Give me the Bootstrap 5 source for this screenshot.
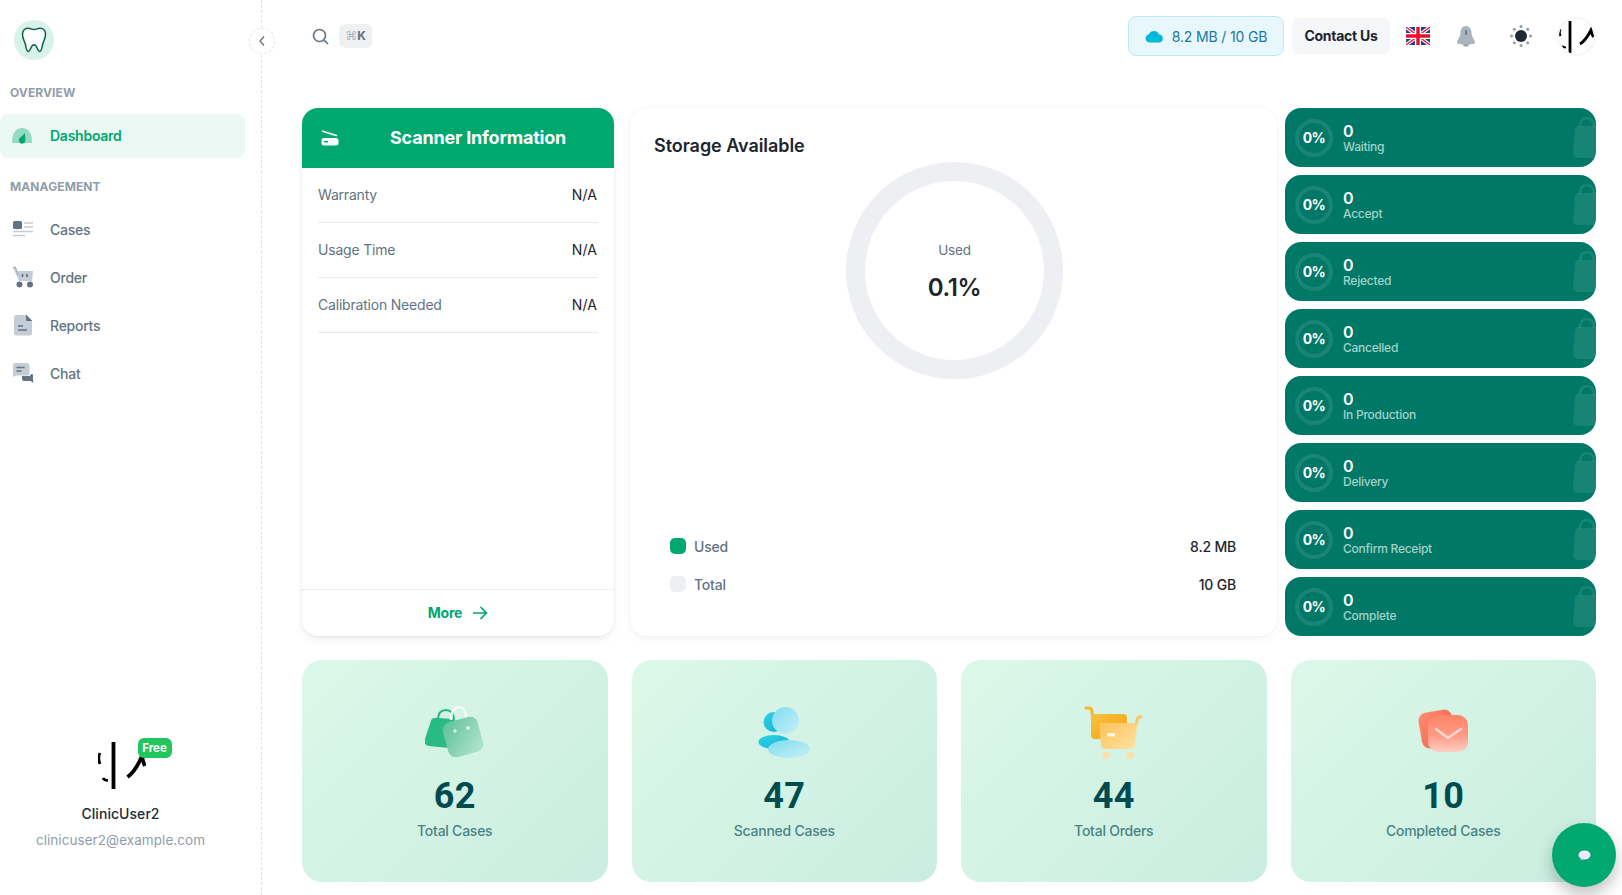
<!DOCTYPE html>
<html lang="en">
<head>
<meta charset="utf-8">
<title>Dashboard</title>
<link rel="stylesheet" href="https://cdn.jsdelivr.net/npm/bootstrap@5.3.0/dist/css/bootstrap.min.css">
<style>
html,body{height:100%;overflow:hidden;background:#fff}
body{font-family:"Inter","Noto Sans",sans-serif;font-size:14px;color:#1C252E}
.shell{height:895px}
.side{width:262px;flex:none;border-right:1px dashed #dfe3e8;position:relative;padding-top:20px}
.logo-disc{width:40px;height:40px;margin-left:14px;border-radius:50%;background:#d8f3ea}
.collapse-btn{position:absolute;left:249px;top:28px;width:26px;height:26px;border-radius:50%;border:1px dashed #dfe3e8;background:#fff}
.nav-head{font-size:12px;font-weight:700;color:#919EAB;line-height:18px;padding-left:10px;letter-spacing:.1px}
.nav-head.first{margin-top:24px;margin-bottom:12px}
.nav-head.second{margin-top:16px;margin-bottom:11px}
.side-link{height:44px;width:245px;padding:0 0 0 12px;margin-bottom:4px;color:#637381;font-size:14px;font-weight:500;border-radius:0 8px 8px 0;letter-spacing:-.25px}
.side-link svg{width:22px;height:22px;margin-right:16px;flex:none}
.side-link.on{background:rgba(0,167,111,.08);color:#00A76F;font-weight:600;border-radius:8px;padding-bottom:1px}
.side-user{margin-top:auto;padding:0 20px 44px 0;text-align:center}
.ava-wrap{position:relative;width:48px;height:48px;margin:0 auto 14px;left:1px}
.free-tag{position:absolute;left:40px;top:-3px;width:34px;height:20px;border-radius:6px;background:#22C55E;color:#fff;font-size:11.5px;font-weight:700;line-height:20px}
.u-name{font-weight:500;font-size:14px;line-height:22px;letter-spacing:.05px;color:#212B36}
.u-mail{color:#919EAB;font-size:13.5px;line-height:22px;margin-top:4px;letter-spacing:.06px}
.topper{height:72px;padding:0 26px 0 50px}
.kbd-chip{width:33px;height:24px;margin-left:10px;border-radius:6px;background:#eef0f2;color:#637381;font-size:12px;font-weight:700}
.cmd-g{font-family:"DejaVu Sans",sans-serif;font-weight:400;color:#a9b4bf;font-size:12px}
.store-pill{width:156px;height:40px;border:1px solid #bdeaf5;border-radius:8px;background:#e8f7fc;color:#1877a3;font-size:14px;margin-right:8px;letter-spacing:-.15px}
.store-pill svg{margin-right:9px}
.contact-btn{width:98px;height:36px;border-radius:8px;background:#F4F6F8;border:0;color:#1C252E;font-weight:700;font-size:14px;padding:0 0 1px;letter-spacing:-.25px}
.top-ico{width:40px;height:40px}
.ml-a{margin-left:8px}
.ml-b{margin-left:15px}
.top-ava{width:39px;height:39px;border-radius:50%;margin-left:16px;border:2px solid #F4F6F8;overflow:hidden}
.pane{padding:36px 26px 0 40px}
.upper{display:grid;grid-template-columns:312px 663px 319px;height:528px}
.scan-card{border:0;border-radius:16px;overflow:hidden;box-shadow:0 0 2px rgba(145,158,171,.2),0 4px 8px -2px rgba(145,158,171,.28)}
.scan-top{height:60px;background:#00A76F;color:#fff;border:0;padding:0 0 1px 19px;border-radius:0}
.scan-title{font-size:18px;font-weight:700;margin-left:51px;letter-spacing:-.2px}
.scan-body{padding:0 16px}
.scan-row{height:55px;border-bottom:1px solid #e7eaed;font-size:14px;padding-bottom:1px;letter-spacing:-.2px}
.scan-row span:first-child{color:#637381}
.scan-row span:last-child{letter-spacing:.1px;padding-right:1px}
.scan-foot{height:47px;padding:0 0 1px;background:#fff;border-top:1px dotted #dfe3e8;color:#00A76F;font-weight:700;font-size:14px;letter-spacing:-.2px}
.scan-foot svg{margin-left:2px}
.store-card{border:0;border-radius:16px;box-shadow:0 0 2px rgba(145,158,171,.2),0 4px 8px -2px rgba(145,158,171,.12);padding:26px 24px 0;margin-left:16px;width:647px}
.store-title{font-size:18px;font-weight:600;line-height:24px;letter-spacing:-.05px;margin:0}
.donut-box{width:217px;height:217px;margin:4px auto 0;border:19px solid #EDEFF2;border-radius:50%;transform:translateX(1px)}
.donut-used{color:#637381;font-size:13.5px;line-height:20px;margin-top:59px;letter-spacing:-.2px}
.donut-val{font-size:24px;font-weight:600;line-height:32px;margin-top:12px;letter-spacing:-.3px}
.legend{margin-top:auto;padding:0 17px 33px 16px}
.legend-row{height:38px;font-size:14px;letter-spacing:-.2px}
.legend-row .nm{color:#637381;font-weight:500}
.legend-row .vl{font-weight:500}
.dot-g{width:16px;height:16px;border-radius:5px;background:#00A76F;margin-right:8px}
.dot-l{width:16px;height:16px;border-radius:5px;background:#EDEFF2;margin-right:8px}
.stat-stack{margin-left:8px;width:311px;height:528px;gap:8px}
.stat-tile{height:59px;border-radius:16px;background:#007867;color:#fff;padding:2px 0 0 10px;position:relative;overflow:hidden}
.stat-ring{width:38px;height:38px;border-radius:50%;border:4px solid rgba(255,255,255,.1);font-size:14px;font-weight:700;margin:0 10px 2px 0;letter-spacing:-.6px}
.stat-num{font-size:16px;font-weight:600;line-height:16px}
.stat-lab{font-size:12px;font-weight:500;line-height:14px;color:#a3d2c8;margin-top:1px;letter-spacing:-.25px}
.stat-bag{position:absolute;left:288px;top:9px;width:28px;height:42px}
.lower{display:grid;grid-template-columns:repeat(4,1fr);column-gap:24px;margin-top:24px}
.kpi{height:222px;border:0;border-radius:20px;background:linear-gradient(135deg,#dcf8e9,#c9ede0);padding-top:46px;text-align:center}
.kpi svg{display:block;margin:0 auto;width:60px;height:54px}
.kpi-num{font-family:"Roboto",sans-serif;font-size:36px;font-weight:700;line-height:40px;color:#004B50;margin-top:16px;letter-spacing:.4px}
.kpi-lab{font-size:14px;font-weight:500;color:#004B50;opacity:.66;line-height:22px;margin-top:4px;letter-spacing:-.25px}
.chat-fab{position:fixed;left:1552px;top:823px;width:64px;height:64px;border-radius:50%;background:#00A76F;border:0;padding:0;box-shadow:0 8px 16px rgba(0,0,0,.24)}
</style>
</head>
<body>
<div class="d-flex shell">
  <aside class="side d-flex flex-column">
    <div class="logo-disc d-flex align-items-center justify-content-center">
      <svg width="26" height="28" viewBox="0 0 26 28" fill="#fbfdfc" stroke="#0d5f50" stroke-width="1.5" stroke-linejoin="round"><path d="M7 2.2c2.2 0 3.800 1.400 6 1.400s3.800-1.400 6-1.400c3.500 0 5.500 2.800 5.500 6.300 0 4-2 6.500-2.800 9.500-.7 2.700-1 7.500-3.200 7.500-2.400 0-2-6.800-5.500-6.800S9.900 25.500 7.500 25.500c-2.200 0-2.500-4.800-3.200-7.500C3.500 15 1.500 12.500 1.500 8.500 1.500 5 3.500 2.200 7 2.200z"/></svg>
    </div>
    <button type="button" class="collapse-btn d-flex align-items-center justify-content-center p-0" aria-label="Collapse">
      <svg width="10" height="12" viewBox="0 0 10 12" fill="none" stroke="#637381" stroke-width="1.3"><path d="M7 1.500 3 6l4 4.500"/></svg>
    </button>
    <div class="nav-head first">OVERVIEW</div>
    <nav class="nav flex-column">
      <a class="nav-link side-link on d-flex align-items-center" href="#">
        <svg viewBox="0 0 22 22"><path d="M0 17C0 8 4 3 10 3s10 5 10 14c0 .7-.4 1-1 1H1c-.6 0-1-.3-1-1z" fill="#00A76F" opacity=".36"/><path d="M13 8l.3 7.500a3.200 3.200 0 1 1-5.600-2.200z" fill="#00A76F"/></svg>
        Dashboard
      </a>
    </nav>
    <div class="nav-head second">MANAGEMENT</div>
    <nav class="nav flex-column">
      <a class="nav-link side-link d-flex align-items-center" href="#">
        <svg viewBox="0 0 22 22"><rect x="1" y="3" width="9" height="8" rx="1.500" fill="#637381"/><path d="M12 5h9M12 9h9M1 13.500h20M1 17.500h12" stroke="#c4cdd5" stroke-width="1.500"/></svg>
        Cases
      </a>
      <a class="nav-link side-link d-flex align-items-center" href="#">
        <svg viewBox="0 0 22 22"><path d="M1 1.500h2.500L5 5h16l-1 10H7z" fill="#c4cdd5"/><path d="M1 1.500h2.500L6 9" stroke="#a9b4bf" stroke-width="1.300" fill="none"/><circle cx="7.500" cy="18.500" r="3" fill="#637381"/><circle cx="18" cy="18.500" r="3" fill="#637381"/><path d="M10.500 8v3M15 8v3" stroke="#637381" stroke-width="1.700"/></svg>
        Order
      </a>
      <a class="nav-link side-link d-flex align-items-center" href="#">
        <svg viewBox="0 0 22 22"><path d="M4 1h10l6 6v12a2.500 2.500 0 0 1-2.500 2.500h-13A2.500 2.500 0 0 1 2 19V3a2 2 0 0 1 2-2z" fill="#c4cdd5"/><path d="M14 0.500 20.500 7H15a1 1 0 0 1-1-1z" fill="#637381"/><path d="M6 12h5M6 16h9" stroke="#637381" stroke-width="1.600"/></svg>
        Reports
      </a>
      <a class="nav-link side-link d-flex align-items-center" href="#">
        <svg viewBox="0 0 22 22"><path d="M3 1h12a2.500 2.500 0 0 1 2.500 2.500V11a2.500 2.500 0 0 1-2.500 2.500H4L1 15V3a2 2 0 0 1 2-2z" fill="#c4cdd5"/><path d="M4.500 5.500h8M4.500 9h5" stroke="#637381" stroke-width="1.500"/><path d="M10 14h7.500l2-2H20a1.500 1.500 0 0 1 1 1.500V18l.5 3-3-2H12a2 2 0 0 1-2-2z" fill="#637381"/></svg>
        Chat
      </a>
    </nav>
    <div class="side-user">
      <div class="ava-wrap">
        <svg width="48" height="48" viewBox="0 0 48 48" fill="none" stroke="#000"><path d="M15.500 1v47" stroke-width="3.800"/><path d="M2 12c-1.500 3-1.500 7 0 11M5 37c1 2 3 2.500 5 2.500" stroke-width="2.700"/><path d="M29.500 36C37 31 41 22 44 15c.5 4 1 6 3 10" stroke-width="3.800"/></svg>
        <span class="free-tag">Free</span>
      </div>
      <div class="u-name">ClinicUser2</div>
      <div class="u-mail">clinicuser2@example.com</div>
    </div>
  </aside>

  <main class="flex-grow-1">
    <header class="topper d-flex align-items-center">
      <svg width="17" height="17" viewBox="0 0 17 17" fill="none" stroke="#637381" stroke-width="1.700"><circle cx="7.500" cy="7.500" r="6"/><path d="m12 12 4 4"/></svg>
      <span class="kbd-chip d-inline-flex align-items-center justify-content-center"><span class="cmd-g">⌘</span>K</span>
      <div class="d-flex align-items-center ms-auto">
        <div class="store-pill d-flex align-items-center justify-content-center">
          <svg width="18" height="13" viewBox="0 0 18 13"><path d="M4.500 12.500a4 4 0 0 1-.7-7.900A5.500 5.500 0 0 1 14 4.500a4 4 0 0 1-.5 8z" fill="#00B8D9"/></svg>
          8.2 MB / 10 GB
        </div>
        <button type="button" class="btn contact-btn">Contact Us</button>
        <div class="top-ico ml-a d-flex align-items-center justify-content-center">
          <svg width="24" height="18" viewBox="0 0 24 18"><rect width="24" height="18" fill="#27408f"/><path d="M0 0l24 18M24 0 0 18" stroke="#fff" stroke-width="3.500"/><path d="M0 0l24 18M24 0 0 18" stroke="#e8112d" stroke-width="1.300"/><path d="M12 0v18M0 9h24" stroke="#fff" stroke-width="6"/><path d="M12 0v18M0 9h24" stroke="#e8112d" stroke-width="3.400"/></svg>
        </div>
        <div class="top-ico ml-a d-flex align-items-center justify-content-center">
          <svg width="20" height="21" viewBox="0 0 20 21"><path d="M10 0c3.500 0 5.500 3 5.500 6.500 0 4 3.500 8 3.500 10 0 1.500-1.500 1.800-9 1.800s-9-.3-9-1.800c0-2 3.500-6 3.500-10C4.500 3 6.500 0 10 0z" fill="#a9b4bf"/><path d="M6.500 18.300c.6 1.500 2 2.300 3.500 2.300s2.900-.8 3.500-2.300z" fill="#919eab"/><rect x="9.100" y="4" width="1.800" height="5" rx=".9" fill="#637381"/></svg>
        </div>
        <div class="top-ico ml-b d-flex align-items-center justify-content-center">
          <svg width="22" height="22" viewBox="0 0 22 22"><circle cx="11" cy="11" r="6" fill="#1f2a37"/><g fill="#919eab"><circle cx="11" cy="1.500" r="1.500"/><circle cx="11" cy="20.500" r="1.500"/><circle cx="1.500" cy="11" r="1.500"/><circle cx="20.500" cy="11" r="1.500"/><circle cx="4.300" cy="4.300" r="1.500"/><circle cx="17.700" cy="4.300" r="1.500"/><circle cx="4.300" cy="17.700" r="1.500"/><circle cx="17.700" cy="17.700" r="1.500"/></g></svg>
        </div>
        <div class="top-ava">
          <svg width="35" height="35" viewBox="0 0 35 35" fill="none" stroke="#000"><path d="M11 2v32" stroke-width="2.800"/><path d="M1.500 10c-1 2-1 5 0 7M3 27c1 1 3 1.500 4 1.500" stroke-width="2.200"/><path d="M21 25c5-3 8-8 11-14 .5 3 1 5 2.500 7" stroke-width="2.800"/></svg>
        </div>
      </div>
    </header>

    <div class="pane">
      <div class="upper">
        <section class="card scan-card">
          <div class="card-header scan-top d-flex align-items-center">
            <svg width="18" height="16" viewBox="0 0 18 16" fill="#fff"><path d="M1 1 16 5.700" stroke="#fff" stroke-width="1.700" fill="none"/><path d="M3 8h12a2.500 2.500 0 0 1 2.500 2.500V13a2.500 2.500 0 0 1-2.500 2.500H3A2.500 2.500 0 0 1 .5 13v-2.500A2.500 2.500 0 0 1 3 8z"/><path d="M3 11.800h4" stroke="#00A76F" stroke-width="1.600"/></svg>
            <span class="scan-title">Scanner Information</span>
          </div>
          <div class="card-body scan-body flex-grow-1">
            <div class="scan-row d-flex align-items-center justify-content-between"><span>Warranty</span><span>N/A</span></div>
            <div class="scan-row d-flex align-items-center justify-content-between"><span>Usage Time</span><span>N/A</span></div>
            <div class="scan-row d-flex align-items-center justify-content-between"><span>Calibration Needed</span><span>N/A</span></div>
          </div>
          <div class="card-footer scan-foot d-flex align-items-center justify-content-center gap-2">
            More
            <svg width="16" height="14" viewBox="0 0 16 14" fill="none" stroke="#00A76F" stroke-width="1.700"><path d="M1 7h13M8.500 1l6 6-6 6"/></svg>
          </div>
        </section>

        <section class="card store-card d-flex flex-column">
          <h2 class="store-title">Storage Available</h2>
          <div class="donut-box d-flex flex-column align-items-center justify-content-start">
            <div class="donut-used">Used</div>
            <div class="donut-val">0.1%</div>
          </div>
          <div class="legend">
            <div class="legend-row d-flex align-items-center"><span class="dot-g"></span><span class="nm">Used</span><span class="vl ms-auto">8.2 MB</span></div>
            <div class="legend-row d-flex align-items-center"><span class="dot-l"></span><span class="nm">Total</span><span class="vl ms-auto">10 GB</span></div>
          </div>
        </section>

        <section class="stat-stack d-flex flex-column">
          <div class="stat-tile d-flex align-items-center"><span class="stat-ring d-flex align-items-center justify-content-center">0%</span><div><div class="stat-num">0</div><div class="stat-lab">Waiting</div></div><svg class="stat-bag" viewBox="0 0 28 42"><path d="M7 10C7 4 10 1 14 1s7 3 7 9" fill="none" stroke="#fff" stroke-opacity=".09" stroke-width="3"/><path d="M6 9h20l2 27a5 5 0 0 1-5 5H5a5 5 0 0 1-5-5L2 13a4 4 0 0 1 4-4z" fill="#fff" fill-opacity=".09"/></svg></div>
          <div class="stat-tile d-flex align-items-center"><span class="stat-ring d-flex align-items-center justify-content-center">0%</span><div><div class="stat-num">0</div><div class="stat-lab">Accept</div></div><svg class="stat-bag" viewBox="0 0 28 42"><path d="M7 10C7 4 10 1 14 1s7 3 7 9" fill="none" stroke="#fff" stroke-opacity=".09" stroke-width="3"/><path d="M6 9h20l2 27a5 5 0 0 1-5 5H5a5 5 0 0 1-5-5L2 13a4 4 0 0 1 4-4z" fill="#fff" fill-opacity=".09"/></svg></div>
          <div class="stat-tile d-flex align-items-center"><span class="stat-ring d-flex align-items-center justify-content-center">0%</span><div><div class="stat-num">0</div><div class="stat-lab">Rejected</div></div><svg class="stat-bag" viewBox="0 0 28 42"><path d="M7 10C7 4 10 1 14 1s7 3 7 9" fill="none" stroke="#fff" stroke-opacity=".09" stroke-width="3"/><path d="M6 9h20l2 27a5 5 0 0 1-5 5H5a5 5 0 0 1-5-5L2 13a4 4 0 0 1 4-4z" fill="#fff" fill-opacity=".09"/></svg></div>
          <div class="stat-tile d-flex align-items-center"><span class="stat-ring d-flex align-items-center justify-content-center">0%</span><div><div class="stat-num">0</div><div class="stat-lab">Cancelled</div></div><svg class="stat-bag" viewBox="0 0 28 42"><path d="M7 10C7 4 10 1 14 1s7 3 7 9" fill="none" stroke="#fff" stroke-opacity=".09" stroke-width="3"/><path d="M6 9h20l2 27a5 5 0 0 1-5 5H5a5 5 0 0 1-5-5L2 13a4 4 0 0 1 4-4z" fill="#fff" fill-opacity=".09"/></svg></div>
          <div class="stat-tile d-flex align-items-center"><span class="stat-ring d-flex align-items-center justify-content-center">0%</span><div><div class="stat-num">0</div><div class="stat-lab">In Production</div></div><svg class="stat-bag" viewBox="0 0 28 42"><path d="M7 10C7 4 10 1 14 1s7 3 7 9" fill="none" stroke="#fff" stroke-opacity=".09" stroke-width="3"/><path d="M6 9h20l2 27a5 5 0 0 1-5 5H5a5 5 0 0 1-5-5L2 13a4 4 0 0 1 4-4z" fill="#fff" fill-opacity=".09"/></svg></div>
          <div class="stat-tile d-flex align-items-center"><span class="stat-ring d-flex align-items-center justify-content-center">0%</span><div><div class="stat-num">0</div><div class="stat-lab">Delivery</div></div><svg class="stat-bag" viewBox="0 0 28 42"><path d="M7 10C7 4 10 1 14 1s7 3 7 9" fill="none" stroke="#fff" stroke-opacity=".09" stroke-width="3"/><path d="M6 9h20l2 27a5 5 0 0 1-5 5H5a5 5 0 0 1-5-5L2 13a4 4 0 0 1 4-4z" fill="#fff" fill-opacity=".09"/></svg></div>
          <div class="stat-tile d-flex align-items-center"><span class="stat-ring d-flex align-items-center justify-content-center">0%</span><div><div class="stat-num">0</div><div class="stat-lab">Confirm Receipt</div></div><svg class="stat-bag" viewBox="0 0 28 42"><path d="M7 10C7 4 10 1 14 1s7 3 7 9" fill="none" stroke="#fff" stroke-opacity=".09" stroke-width="3"/><path d="M6 9h20l2 27a5 5 0 0 1-5 5H5a5 5 0 0 1-5-5L2 13a4 4 0 0 1 4-4z" fill="#fff" fill-opacity=".09"/></svg></div>
          <div class="stat-tile d-flex align-items-center"><span class="stat-ring d-flex align-items-center justify-content-center">0%</span><div><div class="stat-num">0</div><div class="stat-lab">Complete</div></div><svg class="stat-bag" viewBox="0 0 28 42"><path d="M7 10C7 4 10 1 14 1s7 3 7 9" fill="none" stroke="#fff" stroke-opacity=".09" stroke-width="3"/><path d="M6 9h20l2 27a5 5 0 0 1-5 5H5a5 5 0 0 1-5-5L2 13a4 4 0 0 1 4-4z" fill="#fff" fill-opacity=".09"/></svg></div>
        </section>
      </div>

      <div class="lower">
        <div class="card kpi">
          <svg viewBox="0 0 60 54">
            <defs>
              <linearGradient id="gb1" x1="0" y1="0" x2="1" y2="1"><stop offset="0" stop-color="#1fbd80"/><stop offset="1" stop-color="#35b985"/></linearGradient>
              <linearGradient id="gb2" x1="0" y1="0" x2="1" y2="1"><stop offset="0" stop-color="#5cc096"/><stop offset="1" stop-color="#b6e6d2"/></linearGradient>
            </defs>
            <path d="M13 14C13 6 17 4 21 4s8 3 8 11" fill="none" stroke="#22b87d" stroke-width="2"/>
            <path d="M8 13 27 11 32 40 6 42a5 5 0 0 1-5-5L4 17a5 5 0 0 1 4-4z" transform="rotate(10 16 27)" fill="url(#gb1)"/>
            <path d="M26 14C26 5 30 1 34 1s7 4 7 12" fill="none" stroke="#f1fbf7" stroke-width="2.500"/>
            <rect x="20" y="13" width="36" height="36" rx="8" transform="rotate(-15 38 31)" fill="url(#gb2)"/>
            <circle cx="30" cy="25" r="1.700" fill="#d8f3e8"/><circle cx="43" cy="22" r="1.700" fill="#fff"/>
          </svg>
          <div class="kpi-num">62</div>
          <div class="kpi-lab">Total Cases</div>
        </div>
        <div class="card kpi">
          <svg viewBox="0 0 60 54">
            <defs>
              <linearGradient id="gu1" x1="0" y1="0" x2="1" y2="1"><stop offset="0" stop-color="#2ed4e6"/><stop offset="1" stop-color="#10b2d6"/></linearGradient>
              <linearGradient id="gu2" x1="0" y1="0" x2="1" y2="1"><stop offset="0" stop-color="#7fdcef"/><stop offset="1" stop-color="#c6f0f7"/></linearGradient>
            </defs>
            <ellipse cx="20" cy="16" rx="10.500" ry="10" fill="url(#gu1)"/>
            <ellipse cx="31.500" cy="14.500" rx="13.500" ry="13.500" fill="url(#gu2)"/>
            <ellipse cx="20" cy="36" rx="15.500" ry="7" fill="url(#gu1)"/>
            <ellipse cx="35" cy="43" rx="21" ry="9" fill="url(#gu2)"/>
          </svg>
          <div class="kpi-num">47</div>
          <div class="kpi-lab">Scanned Cases</div>
        </div>
        <div class="card kpi">
          <svg viewBox="0 0 60 54">
            <defs>
              <linearGradient id="gc1" x1="0" y1="0" x2="1" y2="1"><stop offset="0" stop-color="#fac23f"/><stop offset="1" stop-color="#f2a30f"/></linearGradient>
              <linearGradient id="gc2" x1="0" y1="0" x2="1" y2="1"><stop offset="0" stop-color="#fbc257"/><stop offset="1" stop-color="#ffe2a6"/></linearGradient>
            </defs>
            <path d="M2 2h3c1.500 0 2.500 1 2.700 3l1 5" fill="none" stroke="#f8b52b" stroke-width="3" stroke-linecap="round"/>
            <rect x="7" y="8" width="36" height="25" rx="4" fill="url(#gc1)"/>
            <path d="M57 11c-2-.5-3.500.5-4 3l-.7 4" fill="none" stroke="#fcc65c" stroke-width="3" stroke-linecap="round"/>
            <path d="M15 17h38l-2 22a5 5 0 0 1-5 4H22a5 5 0 0 1-5-4z" fill="url(#gc2)"/>
            <rect x="23" y="27" width="8" height="3.500" rx="1.500" fill="#fff6e0"/>
            <ellipse cx="22" cy="49.500" rx="3.500" ry="3.500" fill="#ffdfa3"/><ellipse cx="46" cy="49.500" rx="3.500" ry="3.500" fill="#ffdfa3"/>
          </svg>
          <div class="kpi-num">44</div>
          <div class="kpi-lab">Total Orders</div>
        </div>
        <div class="card kpi">
          <svg viewBox="0 0 60 54">
            <defs>
              <linearGradient id="gt1" x1="0" y1="0" x2="1" y2="1"><stop offset="0" stop-color="#ff8f73"/><stop offset="1" stop-color="#f0573f"/></linearGradient>
              <linearGradient id="gt2" x1="0" y1="0" x2="0" y2="1"><stop offset="0" stop-color="#ff8468"/><stop offset=".55" stop-color="#ff9a84"/><stop offset="1" stop-color="#fdcfc4"/></linearGradient>
            </defs>
            <rect x="7" y="5" width="34" height="36" rx="8" transform="rotate(-10 24 23)" fill="url(#gt1)"/>
            <rect x="15" y="9" width="40" height="37" rx="10" fill="url(#gt2)"/>
            <path d="M23 23l12 9 13-9" fill="none" stroke="#ffd9cf" stroke-width="2.500" stroke-linecap="round" stroke-linejoin="round"/>
          </svg>
          <div class="kpi-num">10</div>
          <div class="kpi-lab">Completed Cases</div>
        </div>
      </div>
    </div>
  </main>
</div>

<button type="button" class="chat-fab d-flex align-items-center justify-content-center" aria-label="Chat">
  <svg width="13" height="11" viewBox="0 0 13 11"><ellipse cx="6.500" cy="5" rx="6" ry="4.500" fill="#efe9fb"/><path d="M3 8l-.5 2.500L6 9z" fill="#c9bce8"/></svg>
</button>
<script src="https://cdn.jsdelivr.net/npm/bootstrap@5.3.0/dist/js/bootstrap.bundle.min.js"></script>
</body>
</html>
